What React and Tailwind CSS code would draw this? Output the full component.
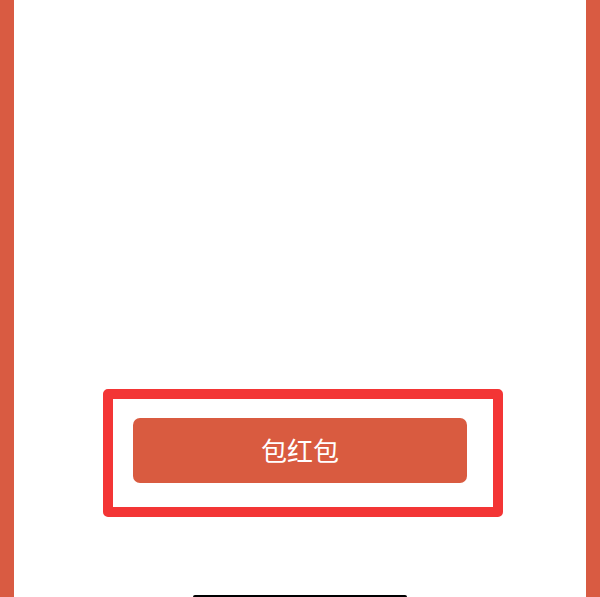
export default function App() {
  return (
    <div className="flex h-[597px] w-[600px] overflow-hidden bg-white" style={{ fontFamily: '"Noto Sans CJK SC", "Noto Sans", sans-serif' }}>
      <div className="w-[14px] shrink-0 bg-[#d95b42]" />
      <div className="flex flex-1 flex-col items-center">
        <div className="h-[389px] shrink-0" />
        <div className="ml-[6px] h-[128px] w-[400px] rounded-[5px] border-[10px] border-[#f33535] pl-[20px] pr-[26px] pt-[19px]">
          <button className="flex h-[65px] w-full items-center justify-center rounded-[7px] bg-[#d95b40] pb-[2px] text-[26px] text-white">
            包红包
          </button>
        </div>
        <div className="flex-1" />
        <div className="h-[2px] w-[214px] rounded-t-full bg-black" />
      </div>
      <div className="w-[14px] shrink-0 bg-[#d95b42]" />
    </div>
  );
}
